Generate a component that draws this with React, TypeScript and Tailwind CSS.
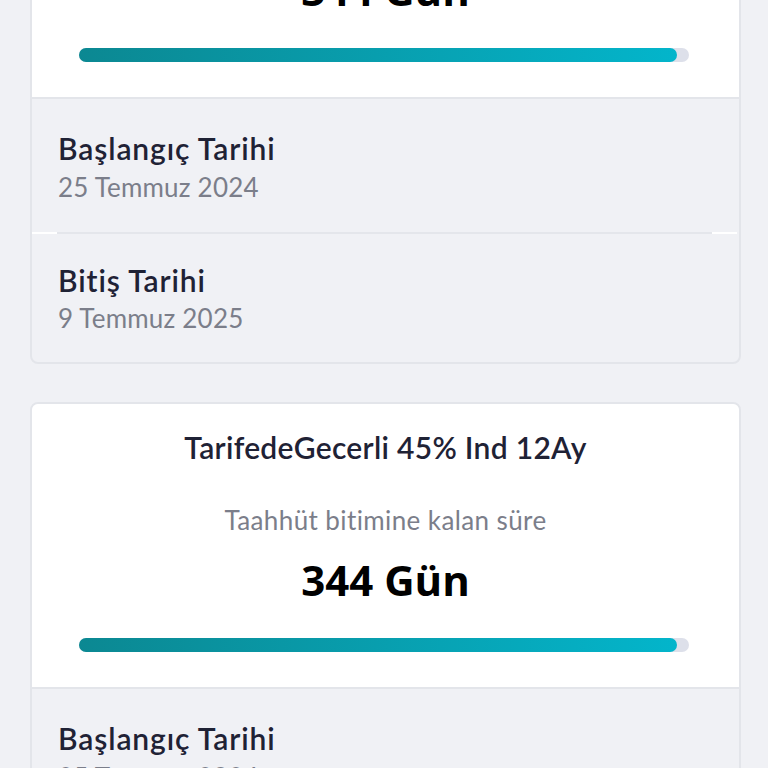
const PERCENT = 98;

function Progress() {
  return (
    <div className="ml-[47px] mr-[50px] h-[14px] rounded-full bg-[#dde0ea]">
      <div
        className="h-full rounded-full bg-gradient-to-r from-[#0b8892] to-[#03b5cb]"
        style={{ width: `${PERCENT}%` }}
      />
    </div>
  );
}

function DateRow({ label, value, className, gap }: { label: string; value: string; className: string; gap: string }) {
  return (
    <div className={`px-[26px] ${className}`}>
      <p className="text-[30px] leading-[36px] font-semibold tracking-[0.9px] text-[#1f2235]">{label}</p>
      <p className={`${gap} text-[26px] leading-[32px] tracking-[0.2px] text-[#7b7e8a]`}>{value}</p>
    </div>
  );
}

function CommitmentCard({ title }: { title: string }) {
  return (
    <div className="overflow-hidden rounded-[8px] border-2 border-[#e3e5ea] bg-[#f0f1f5]">
      <div className="bg-white pt-[25px] pb-[35px] text-center">
        <p className="text-[30px] leading-[36px] font-semibold tracking-[0.3px] text-[#1f2235]">{title}</p>
        <p className="mt-[39px] text-[26px] leading-[32px] tracking-[0.4px] text-[#7b7e8a]">
          Taahhüt bitimine kalan süre
        </p>
        <p className="mt-[18px] text-[42px] leading-[52px] font-bold text-black [font-family:'Open_Sans',sans-serif]">
          344 Gün
        </p>
        <div className="mt-[32px]">
          <Progress />
        </div>
      </div>
      <div className="border-t-2 border-[#e3e5ea]">
        <DateRow label="Başlangıç Tarihi" value="25 Temmuz 2024" className="pt-[31px] pb-[29px]" gap="mt-[5px]" />
        <div className="flex h-[2px] pr-[2px]">
          <div className="w-[25px] bg-white" />
          <div className="flex-1 bg-[#e4e6eb]" />
          <div className="w-[25px] bg-white" />
        </div>
        <DateRow label="Bitiş Tarihi" value="9 Temmuz 2025" className="pt-[28px] pb-[28px]" gap="mt-[4px]" />
      </div>
    </div>
  );
}

export default function App() {
  return (
    <div className="h-[768px] overflow-hidden bg-[#f0f1f5] [font-family:Lato,sans-serif]">
      <div className="-mt-[188px] flex flex-col gap-[38px] pl-[30px] pr-[27px]">
        <CommitmentCard title="TarifedeGecerli 45% Ind 12Ay" />
        <CommitmentCard title="TarifedeGecerli 45% Ind 12Ay" />
      </div>
    </div>
  );
}
